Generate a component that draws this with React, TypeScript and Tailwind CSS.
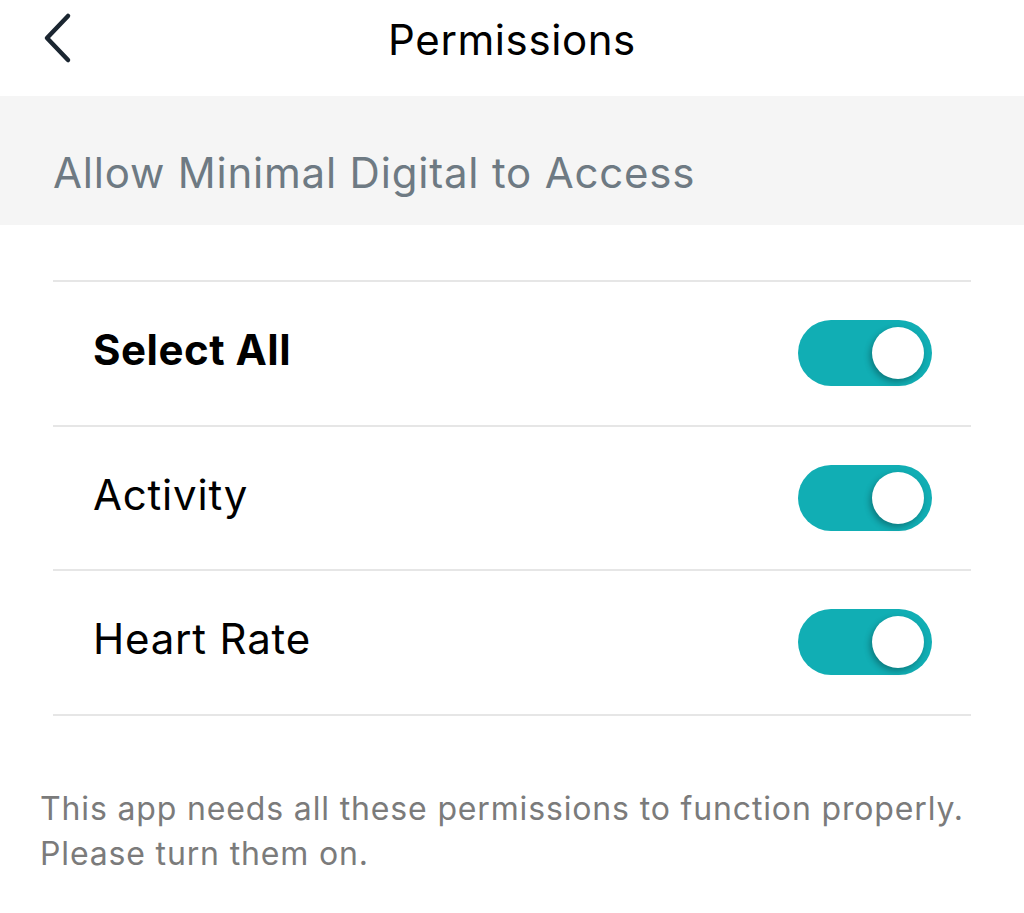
import { useState } from 'react'

function Toggle({ on, onChange }: { on: boolean, onChange: () => void }) {
  return (
    <button
      onClick={onChange}
      className={`relative w-[134px] h-[66px] rounded-full shrink-0 ${on ? 'bg-[#11aeb4]' : 'bg-[#d4d4d4]'}`}
    >
      <span
        className={`absolute top-[7px] w-[52px] h-[52px] rounded-full bg-white shadow-[-2px_3px_6px_rgba(0,0,0,0.3)] ${on ? 'right-[8px]' : 'left-[8px]'}`}
      />
    </button>
  )
}

const rows = [
  { key: 'all', label: 'Select All', bold: true },
  { key: 'activity', label: 'Activity', bold: false },
  { key: 'heart', label: 'Heart Rate', bold: false },
]

export default function App() {
  const [state, setState] = useState<Record<string, boolean>>({ all: true, activity: true, heart: true })

  return (
    <div className="w-[1024px] h-[913px] bg-white font-['Inter',sans-serif] overflow-hidden">
      {/* header */}
      <div className="relative h-[96px] flex items-center justify-center">
        <button className="absolute left-[38px] top-[8px] p-1">
          <svg width="30" height="52" viewBox="0 0 30 52" fill="none">
            <path d="M26 4 L5 26 L26 48" stroke="#1b2631" strokeWidth="4.5" strokeLinecap="round" strokeLinejoin="round" />
          </svg>
        </button>
        <h1 className="text-[42px] leading-none tracking-[0.6px] text-black -mt-[16px]">Permissions</h1>
      </div>

      {/* section heading */}
      <div className="h-[129px] bg-[#f5f5f5] flex items-center px-[53px]">
        <span className="text-[42px] leading-none tracking-[0.8px] text-[#6e7a83] mt-[24px]">Allow Minimal Digital to Access</span>
      </div>

      {/* list */}
      <div className="mt-[55px] mx-[53px] border-t-[2px] border-[#e6e6e6]">
        {rows.map((r) => (
          <div key={r.key} className="h-[144.5px] flex items-center justify-between pl-[40px] pr-[39px] border-b-[2px] border-[#e6e6e6]">
            <span className={`text-[42px] leading-none text-black -mt-[6px] ${r.bold ? 'font-bold tracking-[0.5px]' : 'tracking-[0.8px]'}`}>{r.label}</span>
            <Toggle on={state[r.key]} onChange={() => setState({ ...state, [r.key]: !state[r.key] })} />
          </div>
        ))}
      </div>

      <p className="mt-[70px] px-[40px] text-[32px] leading-[45px] tracking-[0.85px] text-[#7b7b7b] whitespace-nowrap">
        This app needs all these permissions to function properly.
        <br />
        Please turn them on.
      </p>
    </div>
  )
}
